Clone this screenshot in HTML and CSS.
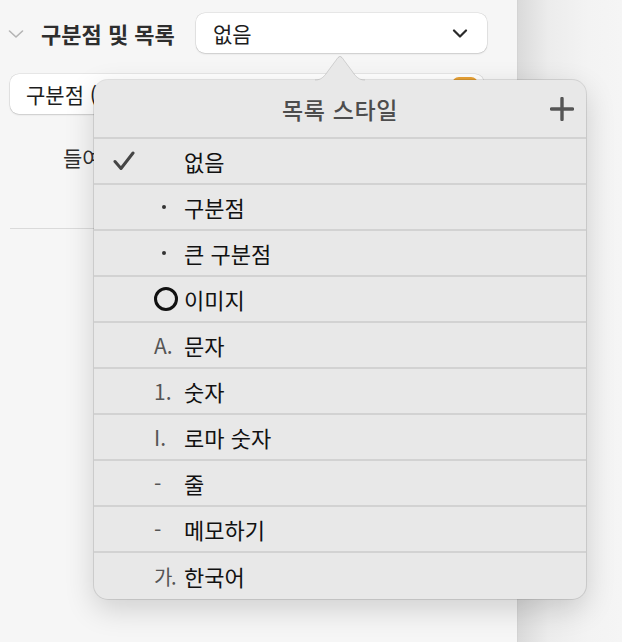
FILE: index.html
```html
<!DOCTYPE html>
<html lang="ko">
<head>
    <meta charset="UTF-8">
    <meta name="viewport" content="width=device-width, initial-scale=1.0">
    <title>목록 스타일</title>
    <link rel="stylesheet" href="styles.css">
</head>
<body>
    <div class="window">
        <aside class="sidebar">
            <div class="section-head">
                <svg class="disclosure" width="16" height="8" viewBox="0 0 16 8">
                    <polyline points="1.5,1 8,7 14.5,1" fill="none" stroke="#b4b4b4" stroke-width="1.6" stroke-linecap="round" stroke-linejoin="round"/>
                </svg>
                <span class="section-title">구분점 및 목록</span>
                <div class="select">
                    <span>없음</span>
                    <svg width="16" height="9" viewBox="0 0 16 9">
                        <polyline points="2,1.5 8,7.5 14,1.5" fill="none" stroke="#2a2a2a" stroke-width="2.2" stroke-linecap="round" stroke-linejoin="round"/>
                    </svg>
                </div>
            </div>

            <div class="bullet-box">
                <span>구분점 (텍스트)</span>
                <span class="swatch"></span>
            </div>

            <div class="indent-label">들여쓰기</div>
            <div class="divider"></div>
        </aside>
        <div class="canvas"></div>
    </div>

    <!-- List style popover -->
    <svg class="popover-arrow" width="50" height="28" viewBox="0 0 50 28">
        <path d="M0 25 C6 25 9 22 13 16 L23 2.5 Q25 0 27 2.5 L37 16 C41 22 44 25 50 25 L50 28 L0 28 Z" fill="#e8e8e8"/>
        <path d="M0 25 C6 25 9 22 13 16 L23 2.5 Q25 0 27 2.5 L37 16 C41 22 44 25 50 25" fill="none" stroke="rgba(0,0,0,0.13)" stroke-width="1"/>
    </svg>
    <div class="popover">
        <div class="popover-head">
            <span></span>
            <span class="popover-title">목록 스타일</span>
            <svg class="add" width="24" height="24" viewBox="0 0 24 24">
                <path d="M12 1.5 V22.5 M1.5 12 H22.5" stroke="#555" stroke-width="3.4" stroke-linecap="round"/>
            </svg>
        </div>
        <ul class="styles">
            <li>
                <span class="check">
                    <svg width="22" height="20" viewBox="0 0 22 20">
                        <polyline points="2,10.5 8,17.5 20,2" fill="none" stroke="#454545" stroke-width="3" stroke-linecap="round" stroke-linejoin="round"/>
                    </svg>
                </span>
                <span class="marker"></span>
                <span class="label">없음</span>
            </li>
            <li><span class="check"></span><span class="marker"><i class="dot"></i></span><span class="label">구분점</span></li>
            <li><span class="check"></span><span class="marker"><i class="dot"></i></span><span class="label">큰 구분점</span></li>
            <li><span class="check"></span><span class="marker"><i class="ring"></i></span><span class="label">이미지</span></li>
            <li><span class="check"></span><span class="marker">A.</span><span class="label">문자</span></li>
            <li><span class="check"></span><span class="marker">1.</span><span class="label">숫자</span></li>
            <li><span class="check"></span><span class="marker">I.</span><span class="label">로마 숫자</span></li>
            <li><span class="check"></span><span class="marker">-</span><span class="label">줄</span></li>
            <li><span class="check"></span><span class="marker">-</span><span class="label">메모하기</span></li>
            <li><span class="check"></span><span class="marker marker-ko">가.</span><span class="label">한국어</span></li>
        </ul>
    </div>
</body>
</html>
```

FILE: styles.css
```css
body {
    font-family: "Noto Sans CJK KR", "Noto Sans", sans-serif;
    margin: 0;
    padding: 0;
    color: #1d1d1d;
    width: 622px;
    height: 642px;
    overflow: hidden;
    position: relative;
}

.window {
    display: flex;
    height: 642px;
}

.sidebar {
    width: 518px;
    flex-shrink: 0;
    background-color: #f6f6f6;
    border-right: 1px solid #d4d4d4;
    padding-top: 13px;
    box-sizing: border-box;
}

.canvas {
    flex: 1;
    background: linear-gradient(to right, #dadada, #ececec 30px, #f3f3f3 70px, #f5f5f5);
}

.section-head {
    display: flex;
    align-items: center;
    height: 40px;
    padding-left: 8px;
}

.disclosure {
    margin-top: 2px;
}

.section-title {
    font-size: 22px;
    font-weight: bold;
    color: #2e2e2e;
    margin-left: 17px;
    width: 155px;
}

.select {
    width: 291px;
    height: 40px;
    box-sizing: border-box;
    background-color: #ffffff;
    border-radius: 9px;
    box-shadow: 0 0 0 0.5px rgba(0, 0, 0, 0.12), 0 1px 2px rgba(0, 0, 0, 0.12);
    display: flex;
    align-items: center;
    justify-content: space-between;
    padding: 0 19px 0 17px;
    font-size: 21px;
}

.bullet-box {
    margin: 21px 0 0 10px;
    width: 474px;
    height: 40px;
    box-sizing: border-box;
    background-color: #ffffff;
    border-radius: 9px;
    box-shadow: 0 0 0 0.5px rgba(0, 0, 0, 0.12), 0 1px 2px rgba(0, 0, 0, 0.12);
    display: flex;
    align-items: center;
    justify-content: space-between;
    padding: 0 6px 0 16px;
    font-size: 21px;
}

.swatch {
    align-self: flex-start;
    margin-top: 3px;
    width: 26px;
    height: 34px;
    border-radius: 7px;
    background-color: #e9a235;
}

.indent-label {
    margin-top: 31px;
    padding-left: 63px;
    font-size: 21px;
    line-height: 24px;
    color: #2e2e2e;
}

.divider {
    margin: 59px 0 0 10px;
    height: 1px;
    background-color: #dadada;
}

/* popover over the sidebar */
.popover {
    position: absolute;
    left: 94px;
    top: 80px;
    width: 492px;
    background-color: #e8e8e8;
    border-radius: 14px;
    box-shadow: 0 0 0 1px rgba(0, 0, 0, 0.1), 0 10px 30px rgba(0, 0, 0, 0.16);
    overflow: hidden;
}

.popover-arrow {
    position: absolute;
    left: 315px;
    top: 55px;
    z-index: 2;
}

.popover-head {
    display: grid;
    grid-template-columns: 1fr auto 1fr;
    align-items: center;
    height: 57px;
    border-bottom: 2px solid #d2d2d2;
    padding: 0 12px;
}

.popover-title {
    font-size: 23px;
    font-weight: 500;
    letter-spacing: 0.6px;
    color: #4d4d4d;
    margin-top: 1px;
}

.add {
    justify-self: end;
}

.styles {
    list-style: none;
    margin: 0;
    padding: 0;
}

.styles li {
    display: grid;
    grid-template-columns: 60px 30px 1fr;
    align-items: center;
    height: 44px;
    border-bottom: 2px solid #d2d2d2;
}

.styles li:last-child {
    border-bottom: none;
    height: 46px;
}

.check {
    padding-left: 19px;
    display: flex;
    align-items: center;
}

.marker {
    font-size: 21px;
    color: #555555;
    display: flex;
    align-items: center;
}

.marker-ko {
    font-size: 20px;
    letter-spacing: -1.5px;
}

.dot {
    display: block;
    width: 4px;
    height: 4px;
    border-radius: 50%;
    background-color: #333333;
    margin-left: 8px;
}

.ring {
    display: block;
    width: 24px;
    height: 24px;
    box-sizing: border-box;
    border: 3.2px solid #111111;
    border-radius: 50%;
}

.label {
    font-size: 22px;
    color: #111111;
}
```
